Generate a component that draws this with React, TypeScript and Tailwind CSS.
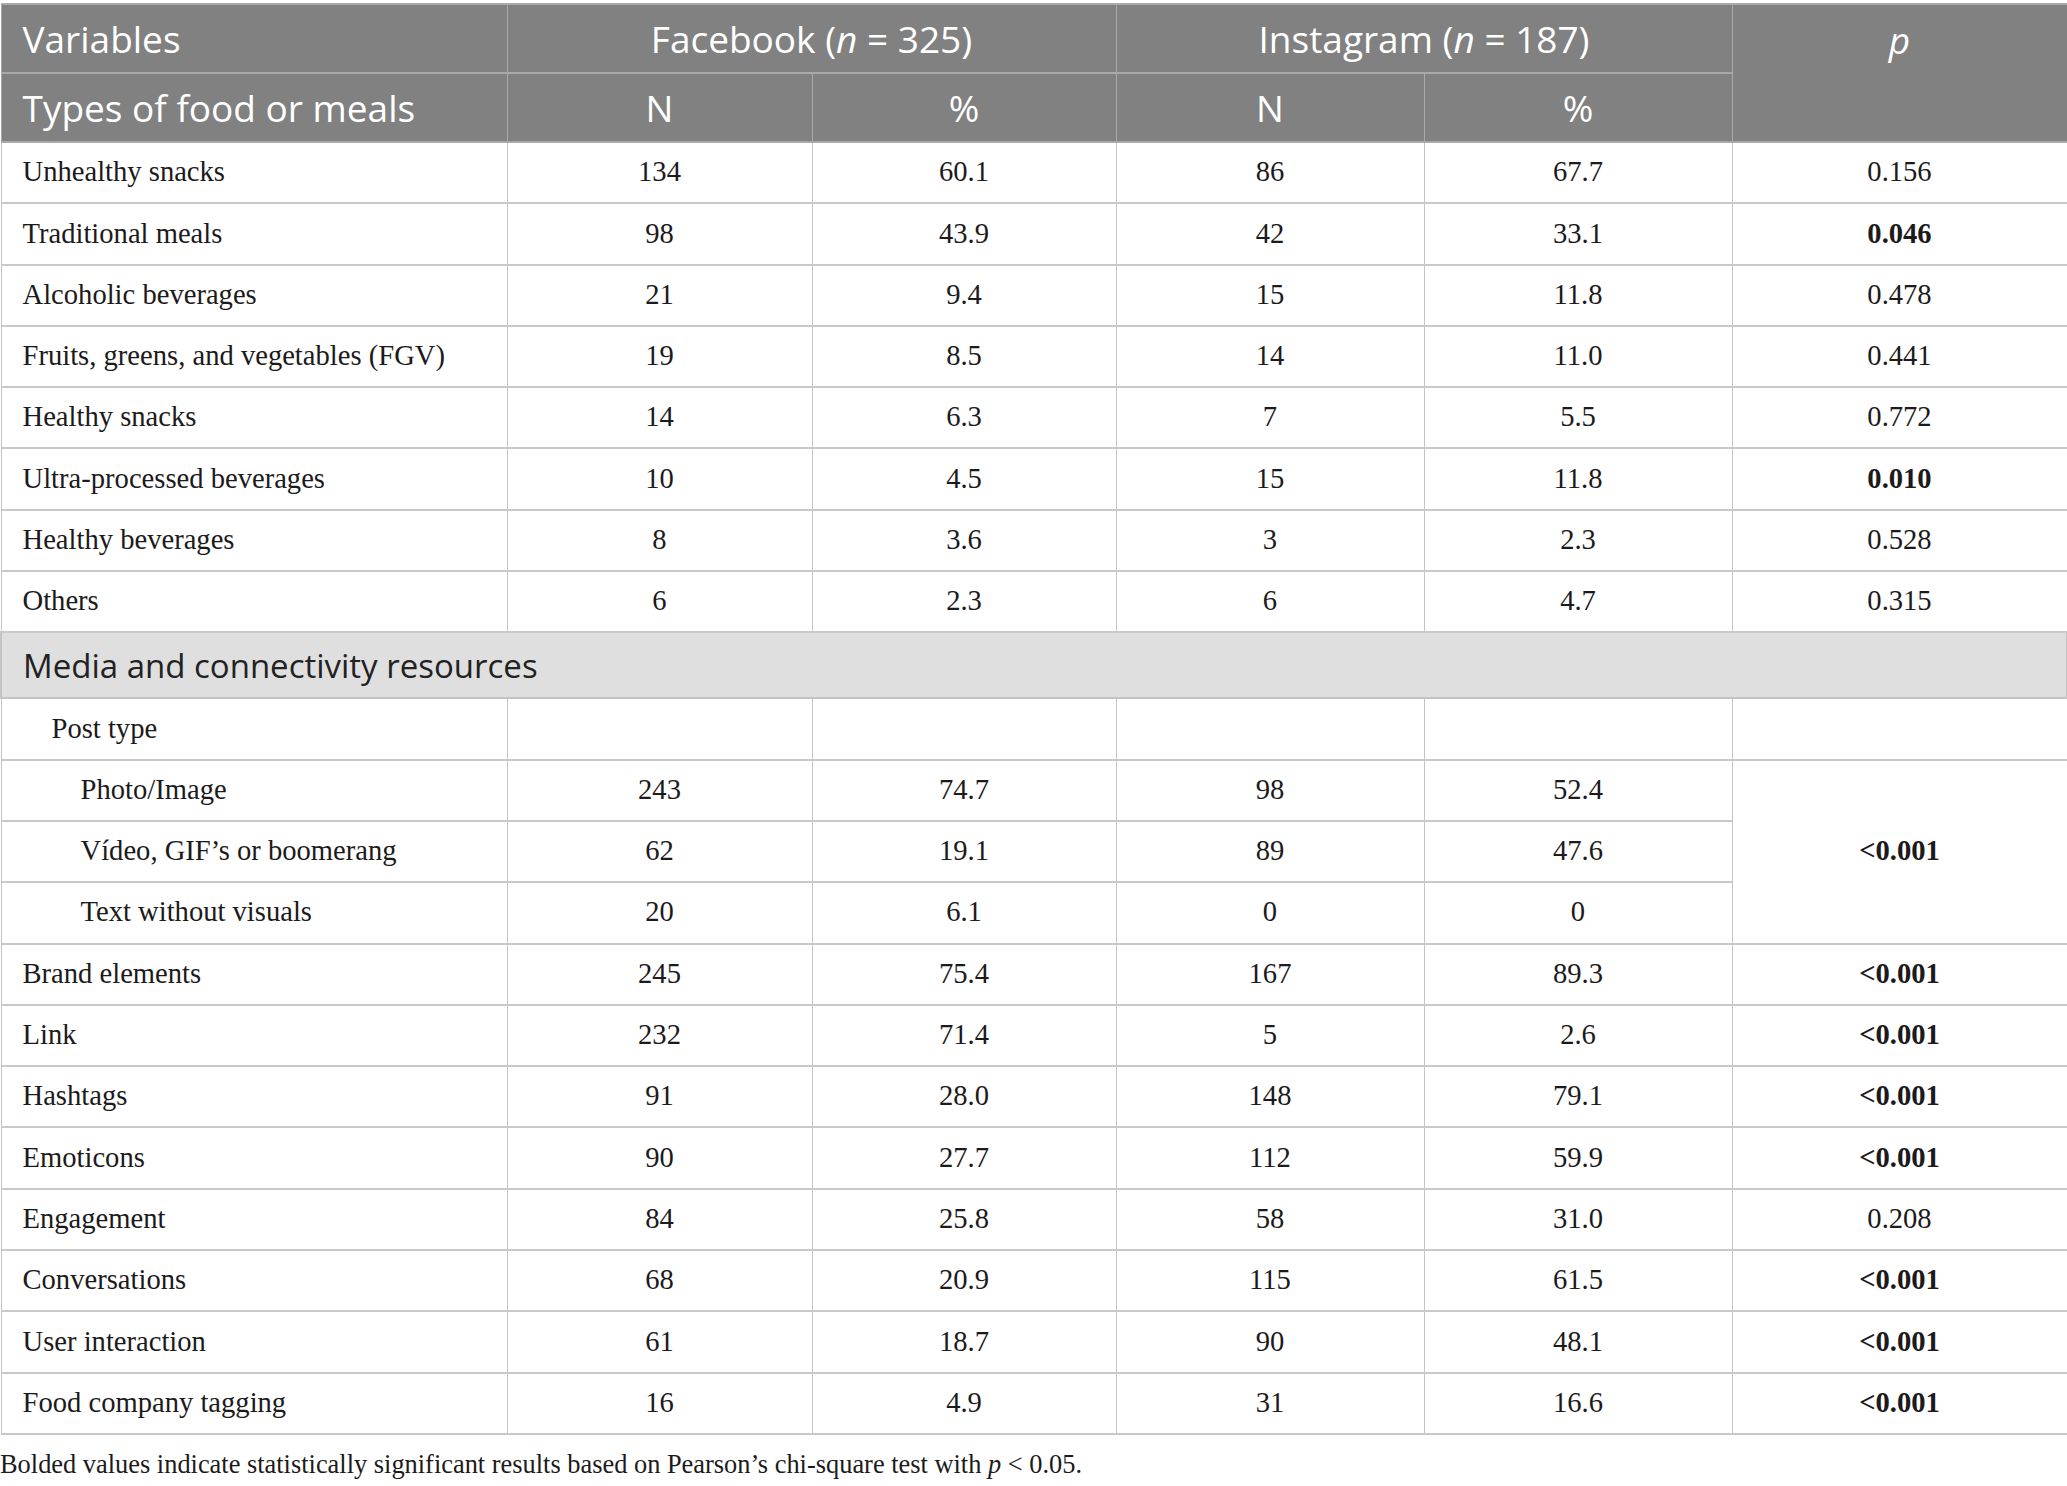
import React from 'react';

type Row = {
  label: string;
  indent?: 0 | 1 | 2;
  fbN: string;
  fbPct: string;
  igN: string;
  igPct: string;
  p?: string;
  bold?: boolean;
};

const foodRows: Row[] = [
  { label: 'Unhealthy snacks', fbN: '134', fbPct: '60.1', igN: '86', igPct: '67.7', p: '0.156' },
  { label: 'Traditional meals', fbN: '98', fbPct: '43.9', igN: '42', igPct: '33.1', p: '0.046', bold: true },
  { label: 'Alcoholic beverages', fbN: '21', fbPct: '9.4', igN: '15', igPct: '11.8', p: '0.478' },
  { label: 'Fruits, greens, and vegetables (FGV)', fbN: '19', fbPct: '8.5', igN: '14', igPct: '11.0', p: '0.441' },
  { label: 'Healthy snacks', fbN: '14', fbPct: '6.3', igN: '7', igPct: '5.5', p: '0.772' },
  { label: 'Ultra-processed beverages', fbN: '10', fbPct: '4.5', igN: '15', igPct: '11.8', p: '0.010', bold: true },
  { label: 'Healthy beverages', fbN: '8', fbPct: '3.6', igN: '3', igPct: '2.3', p: '0.528' },
  { label: 'Others', fbN: '6', fbPct: '2.3', igN: '6', igPct: '4.7', p: '0.315' },
];

const postTypes: Row[] = [
  { label: 'Photo/Image', indent: 2, fbN: '243', fbPct: '74.7', igN: '98', igPct: '52.4' },
  { label: 'Vídeo, GIF’s or boomerang', indent: 2, fbN: '62', fbPct: '19.1', igN: '89', igPct: '47.6' },
  { label: 'Text without visuals', indent: 2, fbN: '20', fbPct: '6.1', igN: '0', igPct: '0' },
];

const mediaRows: Row[] = [
  { label: 'Brand elements', fbN: '245', fbPct: '75.4', igN: '167', igPct: '89.3', p: '<0.001', bold: true },
  { label: 'Link', fbN: '232', fbPct: '71.4', igN: '5', igPct: '2.6', p: '<0.001', bold: true },
  { label: 'Hashtags', fbN: '91', fbPct: '28.0', igN: '148', igPct: '79.1', p: '<0.001', bold: true },
  { label: 'Emoticons', fbN: '90', fbPct: '27.7', igN: '112', igPct: '59.9', p: '<0.001', bold: true },
  { label: 'Engagement', fbN: '84', fbPct: '25.8', igN: '58', igPct: '31.0', p: '0.208' },
  { label: 'Conversations', fbN: '68', fbPct: '20.9', igN: '115', igPct: '61.5', p: '<0.001', bold: true },
  { label: 'User interaction', fbN: '61', fbPct: '18.7', igN: '90', igPct: '48.1', p: '<0.001', bold: true },
  { label: 'Food company tagging', fbN: '16', fbPct: '4.9', igN: '31', igPct: '16.6', p: '<0.001', bold: true },
];

const serif = "font-['Minion_Pro','Liberation_Serif',serif]";
const sans = "font-['Open_Sans','Noto_Sans',sans-serif]";

const cell = 'border-x border-x-[#c4c4c4] border-y-2 border-y-[#c9c9c9] text-center align-middle';
const labelCell = 'border-x border-x-[#c4c4c4] border-y-2 border-y-[#c9c9c9] text-left align-middle';
const headCell = 'border-x border-x-[#a9a9a9] border-y-2 border-y-[#a9a9a9] font-normal';

function labelPad(indent?: number) {
  if (indent === 2) return 'pl-[79px]';
  if (indent === 1) return 'pl-[50px]';
  return 'pl-[21px]';
}

function BodyRow({ row }: { row: Row }) {
  return (
    <tr className="h-[61.3px]">
      <td className={`${labelCell} ${labelPad(row.indent)}`}>{row.label}</td>
      <td className={cell}>{row.fbN}</td>
      <td className={cell}>{row.fbPct}</td>
      <td className={cell}>{row.igN}</td>
      <td className={cell}>{row.igPct}</td>
      <td className={`${cell} ${row.bold ? 'font-bold' : ''}`}>{row.p}</td>
    </tr>
  );
}

export default function App() {
  return (
    <div className="bg-white w-[2067px] min-h-[1486px] pt-[3px]">
      <table className={`w-[2066px] border-collapse table-fixed text-[28.6px] text-[#1c1a1b] ${serif}`}>
        <colgroup>
          <col className="w-[506px]" />
          <col className="w-[305px]" />
          <col className="w-[304px]" />
          <col className="w-[308px]" />
          <col className="w-[308px]" />
          <col className="w-[335px]" />
        </colgroup>
        <thead className={`bg-[#808180] text-white text-[37px] ${sans}`}>
          <tr className="h-[69px]">
            <th className={`${headCell} text-left pl-[21px]`}>Variables</th>
            <th colSpan={2} className={`${headCell} text-center`}>
              Facebook (<span className="italic">n</span> = 325)
            </th>
            <th colSpan={2} className={`${headCell} text-center`}>
              Instagram (<span className="italic">n</span> = 187)
            </th>
            <th rowSpan={2} className={`${headCell} text-center italic align-top leading-[70px]`}>p</th>
          </tr>
          <tr className="h-[69px]">
            <th className={`${headCell} text-left pl-[21px]`}>Types of food or meals</th>
            <th className={`${headCell} text-center`}>N</th>
            <th className={`${headCell} text-center`}>%</th>
            <th className={`${headCell} text-center`}>N</th>
            <th className={`${headCell} text-center`}>%</th>
          </tr>
        </thead>
        <tbody>
          {foodRows.map((r) => (
            <BodyRow key={r.label} row={r} />
          ))}
          <tr className="h-[66px] bg-[#e0dfe0]">
            <td colSpan={6} className={`border-2 border-[#c4c4c4] pl-[21px] text-left text-[33px] text-[#222] ${sans}`}>
              Media and connectivity resources
            </td>
          </tr>
          <tr className="h-[61.3px]">
            <td className={`${labelCell} ${labelPad(1)}`}>Post type</td>
            <td className={cell}></td>
            <td className={cell}></td>
            <td className={cell}></td>
            <td className={cell}></td>
            <td className={cell}></td>
          </tr>
          {postTypes.map((r, i) => (
            <tr key={r.label} className="h-[61.3px]">
              <td className={`${labelCell} ${labelPad(r.indent)}`}>{r.label}</td>
              <td className={cell}>{r.fbN}</td>
              <td className={cell}>{r.fbPct}</td>
              <td className={cell}>{r.igN}</td>
              <td className={cell}>{r.igPct}</td>
              {i === 0 && (
                <td rowSpan={3} className={`${cell} font-bold`}>&lt;0.001</td>
              )}
            </tr>
          ))}
          {mediaRows.map((r) => (
            <BodyRow key={r.label} row={r} />
          ))}
        </tbody>
      </table>
      <p className={`mt-[10px] text-[26.4px] text-[#1c1a1b] ${serif}`}>
        Bolded values indicate statistically significant results based on Pearson’s chi-square test with <span className="italic">p</span> &lt; 0.05.
      </p>
    </div>
  );
}
